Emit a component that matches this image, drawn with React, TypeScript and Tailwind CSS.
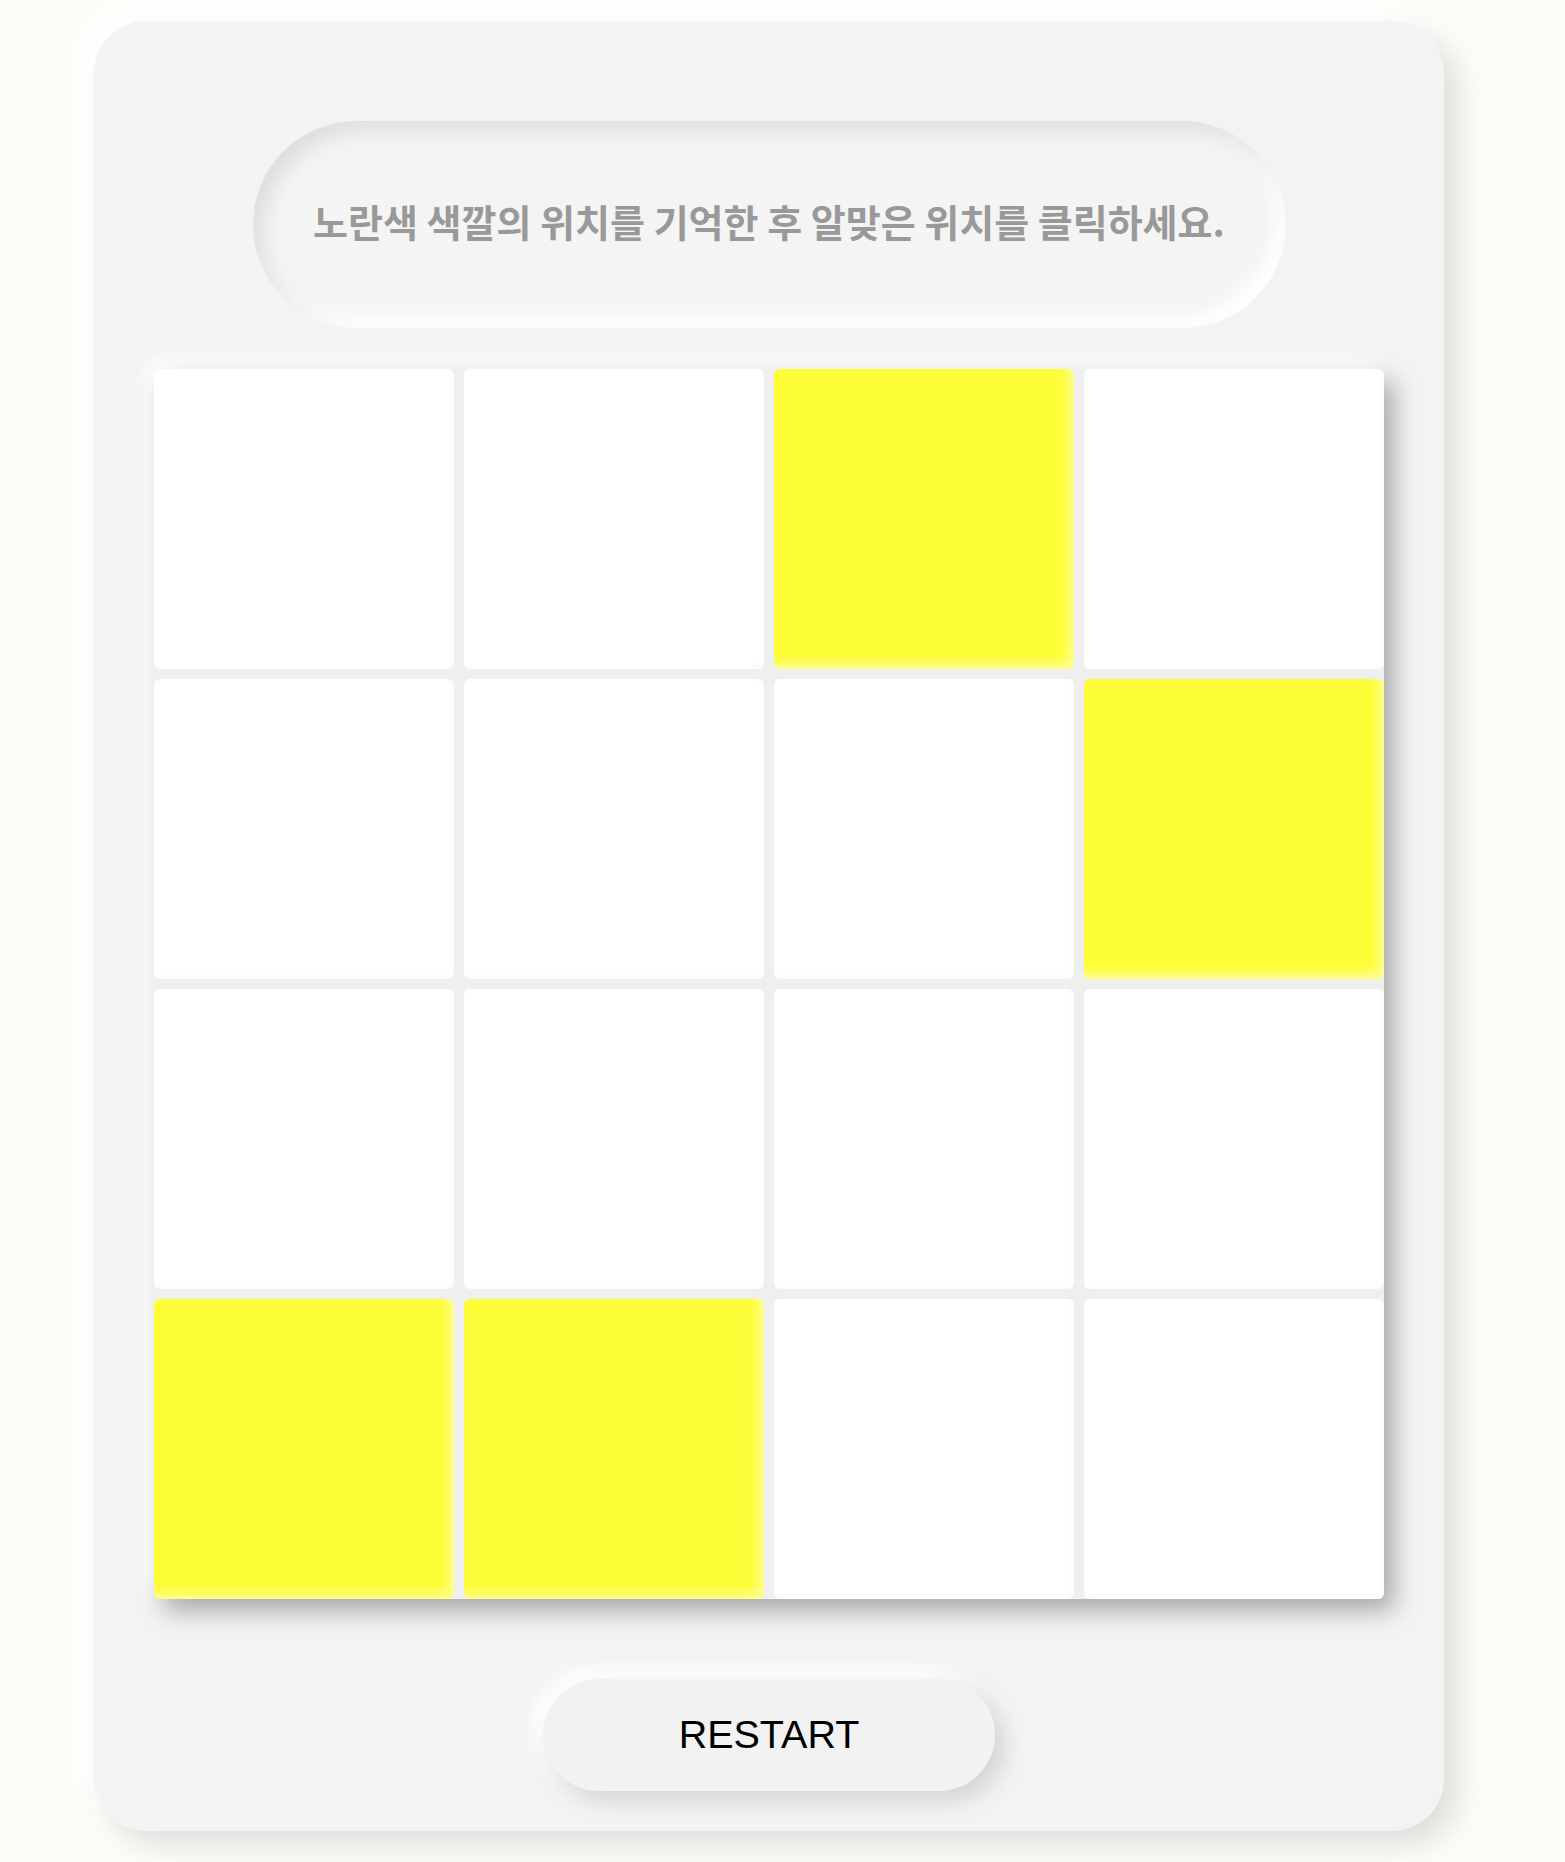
import React from "react";

const yellow = new Set([2, 7, 12, 13]);

export default function App() {
  const cells = Array.from({ length: 16 }, (_, i) => i);
  return (
    <div className="min-h-[1862px] w-full bg-[#fdfcf8] pt-[21px] pl-[94px]">
      <div className="flex w-[1350px] h-[1810px] flex-col items-center rounded-[52px] bg-[#f3f3f3] px-[60px] pt-[100px] pb-[40px] shadow-[14px_14px_30px_rgba(0,0,0,0.12),-14px_-14px_30px_#ffffff]">
        <div className="flex h-[207px] w-[1033px] items-center justify-center rounded-full bg-[#f4f4f4] pb-[8px] shadow-[inset_10px_10px_20px_rgba(0,0,0,0.09),inset_-10px_-10px_20px_#ffffff]">
          <p
            className="text-[38px] font-bold text-[#999999]"
            style={{ fontFamily: '"Noto Sans CJK KR", "Noto Sans", sans-serif' }}
          >
            노란색 색깔의 위치를 기억한 후 알맞은 위치를 클릭하세요.
          </p>
        </div>
        <div className="mt-[41px] grid w-[1230px] grid-cols-4 gap-[10px] rounded-[6px] bg-[#efefef] shadow-[10px_12px_24px_rgba(0,0,0,0.3),-8px_-8px_18px_#ffffff]">
          {cells.map((i) => (
            <div
              key={i}
              className={
                yellow.has(i)
                  ? "h-[300px] rounded-[6px] bg-[#fdfd38] shadow-[inset_-6px_-6px_10px_rgba(255,255,255,0.45)]"
                  : "h-[300px] rounded-[6px] bg-white shadow-[inset_-3px_-3px_6px_rgba(0,0,0,0.015)]"
              }
            />
          ))}
        </div>
        <button
          className="mt-[80px] flex h-[112px] w-[452px] items-center justify-center rounded-full bg-[#f2f2f2] text-[39.5px] text-black shadow-[10px_10px_22px_rgba(0,0,0,0.13),-10px_-10px_22px_#ffffff]"
          style={{ fontFamily: '"Liberation Sans", Arial, sans-serif' }}
        >
          RESTART
        </button>
      </div>
    </div>
  );
}
